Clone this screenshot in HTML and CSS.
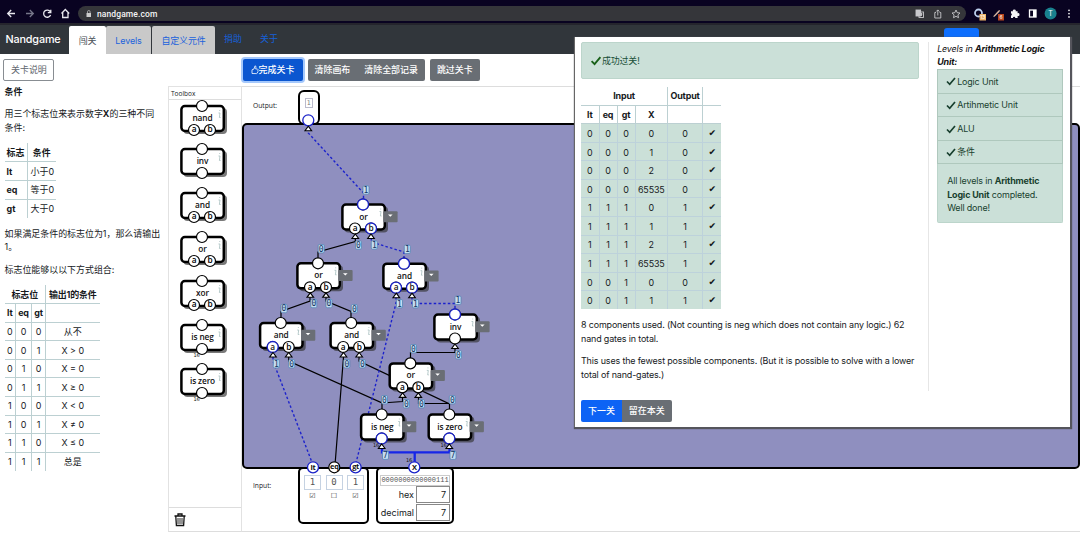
FILE: index.html
```html
<!DOCTYPE html>
<html lang="zh">
<head>
<meta charset="utf-8">
<title>Nandgame</title>
<link rel="stylesheet" href="styles.css">
</head>
<body>
<svg class="defs" width="0" height="0">
  <defs>
    <g id="body">
      <rect x="-18.5" y="2" width="43.5" height="26" rx="4" fill="#333" opacity=".65"/>
      <rect x="-20.6" y="0" width="42.4" height="25" rx="3.5" fill="#fff" stroke="#000" stroke-width="2.5"/>
      <path d="M17.2 4.5h1M16.5 7h1.500l-.6 4.500h1.200" stroke="#9ab5b5" stroke-width=".7" fill="none"/>
    </g>
    <g id="port"><circle r="5.500" fill="#fff" stroke="#000" stroke-width="1.200"/></g>
    <g id="on"><circle r="5.500" fill="#fff" stroke="#1a22c8" stroke-width="1.300"/></g>
    <path id="tri" d="M0 -2.500L3.300 2H-3.300Z" fill="#fff" stroke="#000" stroke-width="1.100"/>
    <g id="menu"><rect x="20.300" y="6.700" width="14.300" height="11" rx="1" fill="#6a6e75"/><path d="M25 10h4.600l-2.300 2.300z" fill="#fff"/></g>
    <g id="gate2"><use href="#body"/><use href="#port"/><use href="#port" x="-8" y="24"/><use href="#port" x="8" y="24"/><text x="-8" y="26.500">a</text><text x="8" y="26.500">b</text></g>
    <g id="gate1"><use href="#body"/><use href="#port"/><use href="#port" y="24"/></g>
    <g id="tris2"><use href="#tri" x="-7.700" y="32"/><use href="#tri" x="8" y="32"/><use href="#menu"/></g>
    <g id="tris1"><use href="#tri" y="32"/><use href="#menu"/></g>
    <rect id="tag" x="-3" y="-4.200" width="6" height="8.400" rx="1.300" fill="#c3dcf0" stroke="#4a7fb0" stroke-width=".7"/>
    <path id="check" d="M1 5.500L3.700 8.300L9 2" fill="none" stroke="currentColor" stroke-width="1.700"/>
  </defs>
</svg>

<header class="chrome">
  <svg class="nav-icons" width="78" height="24" viewBox="0 0 78 24" fill="none" stroke="#e8e8ee" stroke-width="1.300">
    <path d="M15 13.500H8M11.200 10L7.700 13.500L11.200 17"/>
    <path d="M26 13.500h7M29.800 10l3.500 3.500L29.800 17" stroke="#77778a"/>
    <path d="M50.300 11.700A3.600 3.600 0 1 0 50.600 15M50.800 9.700v3h-3"/>
    <path d="M61.500 13.500L65.300 9.500L69.200 13.500M62.700 12.500v5h5.300v-5"/>
  </svg>
  <div class="url">
    <svg width="6" height="8" viewBox="0 0 6 8"><rect x=".5" y="3" width="4.500" height="4" fill="#ccc"/><path d="M1.500 3V1.800a1.300 1.300 0 0 1 2.600 0V3" fill="none" stroke="#ccc" stroke-width=".7"/></svg>
    <span class="host">nandgame.com</span>
    <svg width="50" height="12" viewBox="0 0 50 12" fill="none" stroke="#c8c8cc" stroke-width=".9">
      <rect x="1" y="2" width="4.600" height="6" fill="#c8c8cc"/><rect x="4" y="4" width="4.500" height="5.500"/><path d="M5.500 6h2M6.500 5v3" />
      <path d="M21 4.500h-1.200v5.500h6V4.500h-1.200M22.800 7.500V2M21.200 3.500L22.800 1.900L24.400 3.500"/>
      <path d="M41 2l1.200 2.700 2.800.3-2.100 1.900.6 2.800L41 8.300l-2.500 1.400.6-2.800L37 5l2.800-.3z"/>
    </svg>
  </div>
  <svg width="114" height="24" viewBox="966 0 114 24">
    <circle cx="978.500" cy="13" r="3.500" fill="none" stroke="#bdd0ee" stroke-width="1.800"/><rect x="979.500" y="14" width="6.500" height="6.500" fill="#eeb366"/><text class="badge" x="982.700" y="19.300">13</text>
    <path d="M993 16.500l5.500-6 1.500-.5-.5 1.800-5 5z" fill="#d9b7a2"/><rect x="998" y="14" width="6" height="6.500" fill="#b94720"/><text class="badge" x="1001" y="19.300">6</text>
    <path d="M1011 11.300h2a1.400 1.400 0 1 1 2.600 0h2v2a1.400 1.400 0 1 1 0 2.600v2h-2.300a1.200 1.200 0 0 0-2.400 0H1011v-2.300a1.200 1.200 0 0 0 0-2.300z" fill="#f3f3f6"/>
    <rect x="1029.500" y="10" width="6.500" height="7" fill="none" stroke="#fff" stroke-width="1.300"/><rect x="1033" y="10" width="3" height="7" fill="#fff"/>
    <circle cx="1050.600" cy="13.600" r="6" fill="#19818e"/><text class="avatar" x="1050.600" y="16.200">T</text>
    <g fill="#eee"><circle cx="1069" cy="10.300" r=".9"/><circle cx="1069" cy="13.600" r=".9"/><circle cx="1069" cy="16.900" r=".9"/></g>
  </svg>
</header>

<nav class="navbar">
  <div class="brand">Nandgame</div>
  <a class="tab active">闯关</a>
  <a class="tab levels">Levels</a>
  <a class="tab custom">自定义元件</a>
  <a class="link">捐助</a>
  <a class="link">关于</a>
  <span class="cta"></span>
</nav>

<div class="toolbar">
  <button class="btn outline">关卡说明</button>
  <div class="actions">
    <button class="btn primary focus"><svg width="8" height="10" viewBox="0 0 8 10" fill="none" stroke="#fff" stroke-width=".8"><path d="M1 8.500V4.800L3 4L4 .8C5.200.8 5 2.500 4.700 4H6.500Q7.500 4.500 6.800 5.500Q7.500 6.500 6.500 7Q6.800 8.300 5.500 8.600Z"/></svg>完成关卡</button>
    <div class="group"><button class="btn gray">清除画布</button><button class="btn gray">清除全部记录</button></div>
    <button class="btn gray">跳过关卡</button>
  </div>
</div>

<main class="main">
  <aside class="info">
    <h4>条件</h4>
    <p>用三个标志位来表示数字<b>X</b>的三种不同条件:</p>
    <table class="grid flags">
      <tr><th>标志</th><th>条件</th></tr>
      <tr><th>lt</th><td>小于0</td></tr>
      <tr><th>eq</th><td>等于0</td></tr>
      <tr><th>gt</th><td>大于0</td></tr>
    </table>
    <p>如果满足条件的标志位为1，那么请输出1。</p>
    <p>标志位能够以以下方式组合:</p>
    <table class="grid combos">
      <colgroup><col class="k1"><col class="k2"><col class="k3"><col class="k4"></colgroup>
      <tr><th colspan="3">标志位</th><th>输出1的条件</th></tr>
      <tr><th>lt</th><th>eq</th><th>gt</th><th></th></tr>
      <tr><td>0</td><td>0</td><td>0</td><td>从不</td></tr>
      <tr><td>0</td><td>0</td><td>1</td><td>X &gt; 0</td></tr>
      <tr><td>0</td><td>1</td><td>0</td><td>X = 0</td></tr>
      <tr><td>0</td><td>1</td><td>1</td><td>X ≥ 0</td></tr>
      <tr><td>1</td><td>0</td><td>0</td><td>X &lt; 0</td></tr>
      <tr><td>1</td><td>0</td><td>1</td><td>X ≠ 0</td></tr>
      <tr><td>1</td><td>1</td><td>0</td><td>X ≤ 0</td></tr>
      <tr><td>1</td><td>1</td><td>1</td><td>总是</td></tr>
    </table>
  </aside>

  <section class="toolbox">
    <div class="tb-title">Toolbox</div>
    <div class="tb-items">
      <svg class="gate" viewBox="-33 -7 73 43.900"><use href="#gate2"/><text x=".5" y="15">nand</text></svg>
      <svg class="gate" viewBox="-33 -7 73 43.900"><use href="#gate1"/><text x=".5" y="15">inv</text></svg>
      <svg class="gate" viewBox="-33 -7 73 43.900"><use href="#gate2"/><text x=".5" y="15">and</text></svg>
      <svg class="gate" viewBox="-33 -7 73 43.900"><use href="#gate2"/><text x=".5" y="15">or</text></svg>
      <svg class="gate" viewBox="-33 -7 73 43.900"><use href="#gate2"/><text x=".5" y="15">xor</text></svg>
      <svg class="gate" viewBox="-33 -7 73 43.900"><use href="#gate1"/><text x=".5" y="15">is neg</text><text class="bus" x="-5.500" y="32.500">16</text></svg>
      <svg class="gate" viewBox="-33 -7 73 43.900"><use href="#gate1"/><text x=".5" y="15">is zero</text><text class="bus" x="-5.500" y="32.500">16</text></svg>
    </div>
    <div class="trash">
      <svg width="14" height="16" viewBox="0 0 14 16" fill="none" stroke="#111" stroke-width="1.300"><path d="M1.500 4h11M5 3.500V2h4v1.500M2.800 4.500l.6 9h7.200l.6-9"/><path d="M5 6v6M7 6v6M9 6v6" stroke-width=".9"/></svg>
    </div>
  </section>

  <section class="workspace">
    <div class="row-out"><span class="io-label">Output:</span><div class="out-box"><span class="bit">1</span></div></div>
    <div class="board"></div>
    <div class="row-in">
      <span class="io-label">Input:</span>
      <div class="in-box flagsbox">
        <div class="flag"><span>1</span><i>☑</i></div>
        <div class="flag"><span>0</span><i>☐</i></div>
        <div class="flag"><span>1</span><i>☑</i></div>
      </div>
      <div class="in-box numbox">
        <div class="bin">0000000000000111</div>
        <div class="num"><label>hex</label><span>7</span></div>
        <div class="num"><label>decimal</label><span>7</span></div>
      </div>
    </div>
    <svg class="wires gate" width="838" height="447" viewBox="242 86 838 447">
      <g fill="none" stroke="#000" stroke-width="1.200">
        <path d="M355.300 238V241.500L318 252V262M310 297V301L281 311.500V322M326 297V301L351 311.500V322M288.700 357V361L382 403V413M343.500 357L335 465M359 357V361L449.500 404V413M455 348V352.500H410.500V362M402.500 397V401.500L382 403M418.500 395V403.500H449"/>
        <g stroke="#1c22cc" stroke-width="1.400" stroke-dasharray="2.500 2.200">
          <path d="M308.300 128V133L363.500 193V203M371.300 238V242L404 252V262M396 297V303L355.500 465M412 297V303.500H455V312M273 357V361L313 465"/>
        </g>
        <path d="M382 448V452.300H449.500V448M414.700 452V465" stroke="#1726e8" stroke-width="2.300"/>
      </g>
      <g transform="translate(363 204.500)"><use href="#gate2"/><use href="#on"/><use href="#on" x="8" y="24"/><text x=".5" y="15">or</text><text x="8" y="26.500">b</text><use href="#tris2"/></g>
      <g transform="translate(318 263.300)"><use href="#gate2"/><text x=".5" y="15">or</text><use href="#tris2"/></g>
      <g transform="translate(404 263.700)"><use href="#gate2"/><use href="#on"/><use href="#on" x="-8" y="24"/><use href="#on" x="8" y="24"/><text x=".5" y="15">and</text><text x="-8" y="26.500">a</text><text x="8" y="26.500">b</text><use href="#tris2"/></g>
      <g transform="translate(280.700 323)"><use href="#gate2"/><use href="#on" x="-8" y="24"/><text x=".5" y="15">and</text><text x="-8" y="26.500">a</text><use href="#tris2"/></g>
      <g transform="translate(351.200 323)"><use href="#gate2"/><text x=".5" y="15">and</text><use href="#tris2"/></g>
      <g transform="translate(455 314.500)"><use href="#gate1"/><use href="#on"/><text x=".5" y="15">inv</text><use href="#tris1"/></g>
      <g transform="translate(410.300 363.400)"><use href="#gate2"/><text x=".5" y="15">or</text><use href="#tris2"/></g>
      <g transform="translate(381.700 414.500)"><use href="#gate1"/><use href="#on" y="24"/><text x=".5" y="15">is neg</text><use href="#tris1"/></g>
      <g transform="translate(449.300 414.500)"><use href="#gate1"/><use href="#on" y="24"/><text x=".5" y="15">is zero</text><use href="#tris1"/></g>
      <use href="#on" x="308.300" y="120.300"/><use href="#tri" x="308.300" y="128.700"/>
      <use href="#on" x="313" y="467.300"/><text class="pin" x="313" y="470">lt</text>
      <use href="#port" x="334.300" y="467.300"/><text class="pin" x="334.300" y="469.300">eq</text>
      <use href="#on" x="355.600" y="467.300"/><text class="pin" x="355.600" y="469.300">gt</text>
      <use href="#on" x="414.300" y="467.300"/><text class="pin" x="414.300" y="470">X</text>
      <text class="bus" x="376" y="447">16</text><text class="bus" x="443.500" y="447">16</text><text class="bus" x="409" y="462">16</text>
      <g class="tags">
        <use href="#tag" x="366" y="190"/><text x="366" y="192.900">1</text>
        <use href="#tag" x="321.200" y="248.700"/><text x="321.200" y="251.600">0</text>
        <use href="#tag" x="358.500" y="245"/><text x="358.500" y="247.900">0</text>
        <use href="#tag" x="374.300" y="245"/><text x="374.300" y="247.900">1</text>
        <use href="#tag" x="407.300" y="249.300"/><text x="407.300" y="252.200">1</text>
        <use href="#tag" x="284" y="308.500"/><text x="284" y="311.400">0</text>
        <use href="#tag" x="313.800" y="303.500"/><text x="313.800" y="306.400">0</text>
        <use href="#tag" x="329" y="303.500"/><text x="329" y="306.400">0</text>
        <use href="#tag" x="354.300" y="308.700"/><text x="354.300" y="311.600">0</text>
        <use href="#tag" x="399.500" y="303.700"/><text x="399.500" y="306.600">1</text>
        <use href="#tag" x="415.500" y="303.700"/><text x="415.500" y="306.600">1</text>
        <use href="#tag" x="458" y="300.300"/><text x="458" y="303.200">1</text>
        <use href="#tag" x="276.300" y="363.700"/><text x="276.300" y="366.600">1</text>
        <use href="#tag" x="291.700" y="363.700"/><text x="291.700" y="366.600">0</text>
        <use href="#tag" x="346.800" y="363.700"/><text x="346.800" y="366.600">0</text>
        <use href="#tag" x="362.300" y="363.700"/><text x="362.300" y="366.600">0</text>
        <use href="#tag" x="413.500" y="348.700"/><text x="413.500" y="351.600">0</text>
        <use href="#tag" x="458.500" y="354.700"/><text x="458.500" y="357.600">0</text>
        <use href="#tag" x="384.500" y="399.700"/><text x="384.500" y="402.600">0</text>
        <use href="#tag" x="406.300" y="403.700"/><text x="406.300" y="406.600">0</text>
        <use href="#tag" x="421.500" y="403.700"/><text x="421.500" y="406.600">0</text>
        <use href="#tag" x="452.300" y="399.700"/><text x="452.300" y="402.600">0</text>
        <use href="#tag" x="385.500" y="455.200"/><text x="385.500" y="458.100">7</text>
        <use href="#tag" x="453" y="455.200"/><text x="453" y="458.100">7</text>
      </g>
    </svg>
  </section>
</main>

<div class="dialog">
  <div class="result">
    <div class="alert"><svg width="12" height="11" viewBox="0 0 10 10"><use href="#check"/></svg><span>成功过关!</span></div>
    <table class="grid tests">
      <colgroup><col class="c1"><col class="c1"><col class="c1"><col class="c4"><col class="c5"><col class="c6"></colgroup>
      <tr><th colspan="4">Input</th><th>Output</th><th></th></tr>
      <tr><th>lt</th><th>eq</th><th>gt</th><th>X</th><th></th><th></th></tr>
      <tr class="ok"><td>0</td><td>0</td><td>0</td><td>0</td><td>0</td><td>✔</td></tr>
      <tr class="ok"><td>0</td><td>0</td><td>0</td><td>1</td><td>0</td><td>✔</td></tr>
      <tr class="ok"><td>0</td><td>0</td><td>0</td><td>2</td><td>0</td><td>✔</td></tr>
      <tr class="ok"><td>0</td><td>0</td><td>0</td><td>65535</td><td>0</td><td>✔</td></tr>
      <tr class="ok"><td>1</td><td>1</td><td>1</td><td>0</td><td>1</td><td>✔</td></tr>
      <tr class="ok"><td>1</td><td>1</td><td>1</td><td>1</td><td>1</td><td>✔</td></tr>
      <tr class="ok"><td>1</td><td>1</td><td>1</td><td>2</td><td>1</td><td>✔</td></tr>
      <tr class="ok"><td>1</td><td>1</td><td>1</td><td>65535</td><td>1</td><td>✔</td></tr>
      <tr class="ok"><td>0</td><td>0</td><td>1</td><td>0</td><td>0</td><td>✔</td></tr>
      <tr class="ok"><td>0</td><td>0</td><td>1</td><td>1</td><td>1</td><td>✔</td></tr>
    </table>
    <p>8 components used. (Not counting is neg which does not contain any logic.) 62<br>nand gates in total.</p>
    <p>This uses the fewest possible components. (But it is possible to solve with a lower<br>total of nand-gates.)</p>
    <div class="group foot"><button class="btn primary">下一关</button><button class="btn gray">留在本关</button></div>
  </div>
  <div class="progress">
    <div class="ptitle">Levels in <b>Arithmetic Logic<br>Unit:</b></div>
    <ul>
      <li><svg width="10" height="10" viewBox="0 0 10 10"><use href="#check"/></svg>Logic Unit</li>
      <li><svg width="10" height="10" viewBox="0 0 10 10"><use href="#check"/></svg>Artihmetic Unit</li>
      <li><svg width="10" height="10" viewBox="0 0 10 10"><use href="#check"/></svg>ALU</li>
      <li><svg width="10" height="10" viewBox="0 0 10 10"><use href="#check"/></svg>条件</li>
    </ul>
    <div class="done">All levels in <b>Arithmetic<br>Logic Unit</b> completed.<br>Well done!</div>
  </div>
</div>
</body>
</html>
```

FILE: styles.css
```css
* { box-sizing: border-box; }
body { margin: 0; width: 1080px; height: 534px; overflow: hidden; position: relative; background: #fff; color: #16191c; font: 8.950px/13.450px Inter, "Noto Sans CJK SC", sans-serif; }
.defs { position: absolute; }

.chrome { height: 25px; display: flex; background: #090321; border-bottom: 2px solid #25252d; }
.chrome svg { flex: none; }
.url { width: 888px; height: 15px; margin-top: 6px; border-radius: 8px; background: #35363a; display: flex; align-items: center; padding: 0 1px 0 8px; }
.host { color: #f4f4f4; font: 500 8.500px Roboto, sans-serif; letter-spacing: .1px; margin: 0 auto 0 5px; }
.badge { font: 5px Inter, sans-serif; fill: #fff; text-anchor: middle; }
.avatar { font: 7px Inter, sans-serif; fill: #fff; text-anchor: middle; }

.navbar { height: 29px; background: #31363b; display: flex; align-items: flex-end; }
.brand { width: 69px; padding-left: 5.500px; font-size: 10.800px; letter-spacing: -.15px; font-weight: 500; color: #fff; line-height: 29px; }
.tab { height: 28px; line-height: 29px; text-align: center; background: #c9c9c9; color: #1a62dc; border-radius: 2px 2px 0 0; letter-spacing: -.1px; }
.tab.active { width: 37px; background: #fff; color: #495057; }
.levels { width: 45px; margin-right: 1px; }
.custom { width: 63px; }
.link { color: #1660d8; margin-left: 9px; width: 27px; line-height: 28px; padding-bottom: 1px; }
.cta { width: 35px; height: 26px; margin-left: 657px; background: #0d6efd; border-radius: 3px; }

.toolbar { height: 32px; display: flex; padding: 5px 0 0 3px; }
.btn { height: 21.500px; border: 0; border-radius: 2px; padding: 0 7px; font: inherit; font-weight: 500; white-space: nowrap; }
.outline { width: 51px; background: #fff; border: 1px solid #888d92; color: #5f666d; font-weight: 400; }
.primary { background: #0d63f5; color: #fff; }
.gray { background: #696e74; color: #fff; }
.focus { background: #0b56d0; box-shadow: 0 0 0 2px #a5c8fb; width: 60px; display: flex; align-items: center; justify-content: center; }
.group { display: flex; }
.group .btn:first-child { border-radius: 2px 0 0 2px; }
.group .btn:last-child { border-radius: 0 2px 2px 0; }
.actions { display: flex; gap: 5px; margin-left: 188.500px; }

.main { display: flex; height: 446px; }
.info { width: 168px; padding: 0 5px 0 4.500px; margin-top: -1px; }
.info h4 { margin: 0 0 9px; font-size: inherit; }
.info p { margin: 0 0 9px; }
.info table { margin-bottom: 9px; }
.grid { border-collapse: collapse; }
.grid tr { height: 18.580px; }
.grid th, .grid td { padding: 0; border: 1px solid #bcd0d2; text-align: center; line-height: 13px; }
.grid tr:first-child > * { border-top: 0; }
.grid tr:last-child > * { border-bottom: 0; }
.grid tr > :first-child { border-left: 0; }
.grid tr > :last-child { border-right: 0; }
.flags th:first-child { text-align: left; padding-left: 2px; width: 23px; }
.flags { width: 51px; }
.flags td { text-align: left; padding-left: 2.500px; }
.combos { table-layout: fixed; width: 95px; }
.combos th { letter-spacing: -.15px; }
.k1 { width: 11px; } .k2 { width: 16px; } .k3 { width: 14px; } .k4 { width: 54px; }

.toolbox { width: 74px; border: 1px solid #e2e2e2; border-bottom-color: #ddd; display: flex; flex-direction: column; }
.tb-title { height: 13px; padding-left: 2px; font: 6.500px/13px "Open Sans", sans-serif; border-bottom: 1px solid #ddd; }
.tb-items { flex: 1; display: flex; flex-direction: column; padding-top: 0; margin-top: -1.500px; }
.tb-items svg { width: 73px; height: 43.900px; flex: none; }
.trash { height: 24.500px; border-top: 1px solid #ddd; padding: 4px 0 0 4px; }
.gate { font: 600 8.300px "Open Sans", "Noto Sans", sans-serif; letter-spacing: -.1px; text-anchor: middle; }
.gate text { fill: #111; }
.gate .pin { font-size: 7.500px; font-weight: 700; letter-spacing: -.3px; }
.gate .bus { font: 5px "DejaVu Sans", sans-serif; }
.tags { font: 8px "DejaVu Sans Mono", monospace; letter-spacing: 0; }
.gate .tags text { fill: #123764; }

.workspace { width: 838px; position: relative; border-top: 1px solid #ddd; border-bottom: 1px solid #ddd; display: flex; flex-direction: column; }
.row-out, .row-in { display: flex; }
.row-out { height: 36px; padding-top: 3px; }
.io-label { width: 56px; padding-left: 11px; font: 6.700px/31px "Open Sans", sans-serif; }
.out-box { width: 21.500px; height: 35px; border: 2.500px solid #000; border-radius: 6px; display: flex; justify-content: center; padding-top: 6px; }
.bit { width: 8px; height: 10px; border: 1px solid #bbc; font: 6.500px/8px "DejaVu Sans Mono", monospace; text-align: center; color: #777; }
.board { height: 345.500px; flex: none; background: #8f8fbf; border: 2.500px solid #000; border-radius: 5px; }
.row-in { margin-top: -2px; }
.row-in .io-label { line-height: 38px; }
.in-box { height: 57px; border: 2.500px solid #000; border-radius: 5px; background: #fff; }
.flagsbox { width: 71px; display: flex; justify-content: center; gap: 4.500px; padding: 6px 0 0 1px; }
.flag { width: 17px; font: 9px/13px "DejaVu Sans Mono", monospace; color: #555; text-align: center; }
.flag span { display: block; height: 15px; border: 1px solid #c5d2e2; }
.flag i { display: block; font: 7px/13px "DejaVu Sans", sans-serif; color: #333; }
.numbox { width: 78px; margin-left: 7px; padding: 6px 2px 0; }
.bin { height: 11px; border: 1px solid #ccc; font: 7px/9px "Liberation Mono", monospace; color: #555; white-space: nowrap; display: flex; justify-content: center; margin-bottom: 0; }
.num { display: flex; justify-content: flex-end; gap: 2px; height: 17.500px; line-height: 18px; font-size: 9px; margin: 0 0 .5px 0; }
.num span { width: 34px; border: 1px solid #888; text-align: right; padding-right: 3px; line-height: 16px; }
.wires { position: absolute; left: 0; top: -1px; }

.dialog { position: absolute; left: 574px; top: 37px; width: 496px; height: 390px; background: #fff; border-left: 1px solid #666; box-shadow: 1px 1px 1px 1px #55555c; display: flex; padding: 5px 7px 0 6px; letter-spacing: -.15px; }
.result { width: 348px; height: 349px; border-right: 1px solid #e6e6e6; }
.alert { width: 338px; height: 36.500px; background: #cbe0d8; border: 1px solid #bcd5cb; border-radius: 2px; display: flex; align-items: center; padding-left: 8px; color: #174e36; }
.alert svg { color: #186018; }
.tests { table-layout: fixed; width: 140px; margin: 8px 0 9px; }
.c1 { width: 18px; } .c4 { width: 32.500px; } .c5 { width: 35px; } .c6 { width: 18.500px; }
.ok td { background: #cbe0d8; border-color: #bdd2db; padding-top: 1px; }
.ok td:last-child { font-family: "DejaVu Sans", sans-serif; }
.result p { margin: 0 0 9px; white-space: nowrap; }
.foot { margin-top: 19px; letter-spacing: 0; }
.progress { width: 126px; margin-left: 8.500px; }
.ptitle { font-style: italic; color: #111; white-space: nowrap; margin-bottom: 0; }
.progress ul { list-style: none; margin: 0; padding: 0; border: 1px solid #afc8bd; border-bottom: 0; background: #cbe0d8; color: #183f2e; }
.progress li { height: 23.650px; display: flex; align-items: center; gap: 1px; padding-left: 8px; border-bottom: 1px solid #afc8bd; }
.done { background: #cbe0d8; border: 1px solid #bcd5cb; border-top: 0; border-radius: 0 0 2px 2px; height: 59px; padding: 10px 0 0 9px; color: #183f2e; white-space: nowrap; }
```
